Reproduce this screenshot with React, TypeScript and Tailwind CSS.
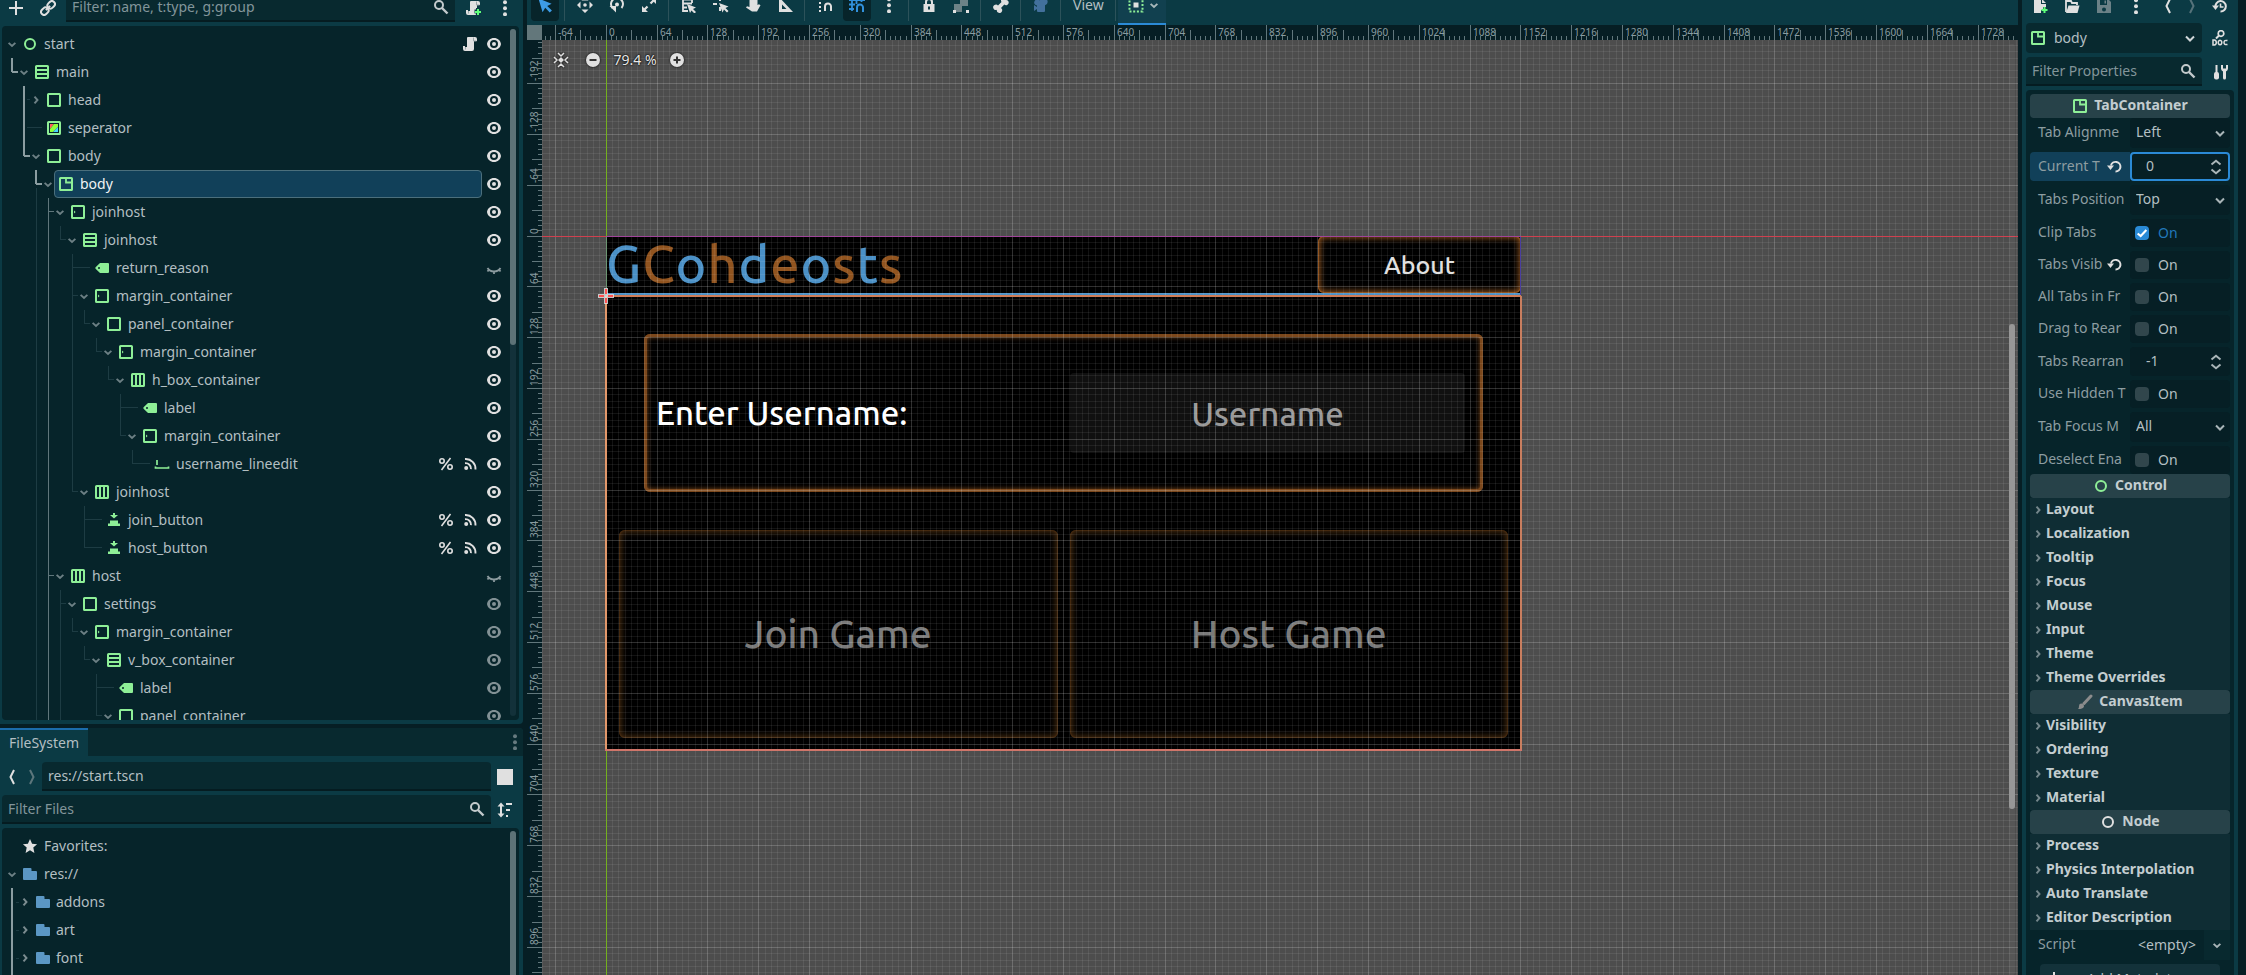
import React from "react";

type IconProps = { className?: string };

const GREEN = "#8eef97";

function Svg({ children, className = "", size = 16 }: { children: React.ReactNode; className?: string; size?: number }) {
  return (
    <svg width={size} height={size} viewBox="0 0 16 16" fill="none" className={"shrink-0 " + className} aria-hidden="true">
      {children}
    </svg>
  );
}

/* ---------- node type icons ---------- */

type NodeKind = "ring" | "box" | "vbox" | "hbox" | "margin" | "tabs" | "tag" | "line" | "button" | "color";

function NodeIcon({ kind, color = GREEN }: { kind: NodeKind; color?: string }) {
  const box = <rect x="2" y="2" width="12" height="12" rx="0.6" stroke={color} strokeWidth="2" />;
  switch (kind) {
    case "ring":
      return <Svg><circle cx="8" cy="8" r="5" stroke={color} strokeWidth="2" /></Svg>;
    case "box":
      return <Svg>{box}</Svg>;
    case "vbox":
      return <Svg>{box}<path d="M2 6h12M2 10h12" stroke={color} strokeWidth="2" /></Svg>;
    case "hbox":
      return <Svg>{box}<path d="M6 2v12M10 2v12" stroke={color} strokeWidth="2" /></Svg>;
    case "margin":
      return <Svg>{box}<path d="M4 6.5L5.6 8 4 9.5z" fill={color} /></Svg>;
    case "tabs":
      return <Svg>{box}<path d="M8 2v4.5h6" stroke={color} strokeWidth="1.8" /></Svg>;
    case "tag":
      return (
        <Svg>
          <path fillRule="evenodd" fill={color} d="M6 3L1.6 7.3a1 1 0 0 0 0 1.4L6 13h8a1 1 0 0 0 1-1V4a1 1 0 0 0-1-1zM5 7a1 1 0 1 1 0 2 1 1 0 0 1 0-2z" />
        </Svg>
      );
    case "line":
      return <Svg><path d="M3 4v5M1.5 10.5v1.5h13v-1.5" stroke={color} strokeWidth="1.7" /></Svg>;
    case "button":
      return <Svg><path fill={color} d="M7 1h2v2h3L8 6.5 4 3h3zM4 8.5h8v3h2V14H2v-2.5h2z" /></Svg>;
    case "color":
      return (
        <Svg>
          <path d="M4 4h4L4 9z" fill="#ff5f5f" />
          <path d="M8 4h4v3l-5 5H4V9z" fill="#8eff3a" />
          <path d="M12 7v5H7z" fill="#45d7ff" />
          {box}
        </Svg>
      );
  }
}

/* ---------- small glyphs ---------- */

const Chevron = ({ className = "" }: IconProps) => (
  <Svg className={className}><path d="M4 6.5L8 10.5l4-4" stroke="currentColor" strokeWidth="2" /></Svg>
);
const ArrowDown = ({ className = "" }: IconProps) => (
  <Svg size={12} className={className}><path d="M3.5 6.5L8 10.5l4.500-4" stroke="currentColor" strokeWidth="2.6" /></Svg>
);
const ArrowRight = ({ className = "" }: IconProps) => (
  <Svg size={12} className={className}><path d="M6 3.5L10 8l-4 4.500" stroke="currentColor" strokeWidth="2.6" /></Svg>
);
const Eye = ({ className = "" }: IconProps) => (
  <Svg className={className}>
    <path fillRule="evenodd" fill="currentColor" d="M8 2C4.300 2 1.500 4.500 1 8c.5 3.500 3.300 6 7 6s6.500-2.500 7-6c-.5-3.500-3.300-6-7-6zM8 4a4 4 0 1 1 0 8 4 4 0 0 1 0-8z" />
    <circle cx="8" cy="8" r="2" fill="currentColor" />
  </Svg>
);
const EyeClosed = ({ className = "" }: IconProps) => (
  <Svg className={className}>
    <path d="M1.500 8C3 10.500 5.500 11.500 8 11.500s5-1 6.500-3.500M3 9.500l-1.500 2M8 11.500v2.500M13 9.500l1.500 2" stroke="currentColor" strokeWidth="1.8" />
  </Svg>
);
const ScriptIcon = ({ plus = false }: { plus?: boolean }) => (
  <Svg>
    <path fill="#e0e0e0" d="M6 1a1 1 0 0 0-1 1v9H3v-1H1v3a2 2 0 0 0 2 2h7a2 2 0 0 0 2-2V5h3V3a2 2 0 0 0-2-2z" />
    <path stroke="#9aa5a8" strokeWidth="1" d="M11.500 1.500V5h3M3.500 11v2.500" />
    {plus && <path d="M13 8v7M9.500 11.500h7" stroke="#0b3a44" strokeWidth="4" />}
    {plus && <path d="M13 9v6M10 12h6" stroke="#5fff7a" strokeWidth="2" />}
  </Svg>
);
const Percent = () => (
  <Svg>
    <path d="M12.500 2L3.500 14" stroke="#e0e0e0" strokeWidth="1.5" />
    <circle cx="4" cy="5" r="2.2" stroke="#e0e0e0" strokeWidth="1.6" />
    <circle cx="12" cy="11" r="2.2" stroke="#e0e0e0" strokeWidth="1.6" />
  </Svg>
);
const Signal = () => (
  <Svg>
    <circle cx="4.2" cy="12" r="2" fill="#e0e0e0" />
    <path d="M3 7.200a5.500 5.500 0 0 1 6 6M3 3a9.800 9.800 0 0 1 10.500 10.500" stroke="#e0e0e0" strokeWidth="1.9" />
  </Svg>
);
const Search = ({ className = "" }: IconProps) => (
  <Svg className={className}>
    <circle cx="6" cy="6" r="4" stroke="currentColor" strokeWidth="2" />
    <path d="M9 9l5.500 5.500" stroke="currentColor" strokeWidth="2.4" />
  </Svg>
);
const Dots = ({ className = "text-[#e0e0e0]" }: IconProps) => (
  <Svg className={className}>
    <circle cx="8" cy="2.2" r="2" fill="currentColor" />
    <circle cx="8" cy="8.2" r="2" fill="currentColor" />
    <circle cx="8" cy="14.2" r="2" fill="currentColor" />
  </Svg>
);
const AngleLeft = ({ className = "" }: IconProps) => (
  <Svg className={className}><path d="M10 1L6.500 8l3.500 7" stroke="currentColor" strokeWidth="2" /></Svg>
);
const AngleRight = ({ className = "" }: IconProps) => (
  <Svg className={className}><path d="M6 1l3.500 7L6 15" stroke="currentColor" strokeWidth="2" /></Svg>
);
const Folder = () => (
  <Svg><path fill="#5b97c4" d="M2 2a1 1 0 0 0-1 1v10a1 1 0 0 0 1 1h12a1 1 0 0 0 1-1V6a1 1 0 0 0-1-1H9.500V3a1 1 0 0 0-1-1z" /></Svg>
);
const Revert = () => (
  <Svg>
    <path d="M5 7.500A4.800 4.800 0 1 1 9.500 13.500" stroke="#e0e0e0" strokeWidth="2" />
    <path d="M1 7.500h7L4.500 12z" fill="#e0e0e0" />
  </Svg>
);

/* ---------- scene tree ---------- */

type TreeNode = {
  name: string;
  depth: number;
  kind: NodeKind;
  open?: boolean;
  closed?: boolean;
  selected?: boolean;
  eye?: "on" | "dim" | "off";
  script?: boolean;
  signals?: boolean;
};

const SCENE: TreeNode[] = [
  { name: "start", depth: 0, kind: "ring", open: true, script: true },
  { name: "main", depth: 1, kind: "vbox", open: true },
  { name: "head", depth: 2, kind: "box", closed: true },
  { name: "seperator", depth: 2, kind: "color" },
  { name: "body", depth: 2, kind: "box", open: true },
  { name: "body", depth: 3, kind: "tabs", open: true, selected: true },
  { name: "joinhost", depth: 4, kind: "margin", open: true },
  { name: "joinhost", depth: 5, kind: "vbox", open: true },
  { name: "return_reason", depth: 6, kind: "tag", eye: "off" },
  { name: "margin_container", depth: 6, kind: "margin", open: true },
  { name: "panel_container", depth: 7, kind: "box", open: true },
  { name: "margin_container", depth: 8, kind: "margin", open: true },
  { name: "h_box_container", depth: 9, kind: "hbox", open: true },
  { name: "label", depth: 10, kind: "tag" },
  { name: "margin_container", depth: 10, kind: "margin", open: true },
  { name: "username_lineedit", depth: 11, kind: "line", signals: true },
  { name: "joinhost", depth: 6, kind: "hbox", open: true },
  { name: "join_button", depth: 7, kind: "button", signals: true },
  { name: "host_button", depth: 7, kind: "button", signals: true },
  { name: "host", depth: 4, kind: "hbox", open: true, eye: "off" },
  { name: "settings", depth: 5, kind: "box", open: true, eye: "dim" },
  { name: "margin_container", depth: 6, kind: "margin", open: true, eye: "dim" },
  { name: "v_box_container", depth: 7, kind: "vbox", open: true, eye: "dim" },
  { name: "label", depth: 8, kind: "tag", eye: "dim" },
  { name: "panel_container", depth: 8, kind: "box", open: true, eye: "dim" },
];

const ROW = 28;

function TreeLines() {
  const dim = "#1d3c43";
  const mid = "#5f767b";
  const bright = "#8b9da1";
  const lines: React.ReactNode[] = [];
  const cy = (i: number) => i * ROW + 14;
  const cx = (d: number) => 10 + 12 * d;
  SCENE.forEach((n, i) => {
    if (!n.open) return;
    const kids: number[] = [];
    let ended = false;
    for (let j = i + 1; j < SCENE.length; j++) {
      if (SCENE[j].depth <= n.depth) {
        ended = true;
        break;
      }
      if (SCENE[j].depth === n.depth + 1) kids.push(j);
    }
    const x = cx(n.depth);
    const onPath = i === 0 || i === 1 || i === 4;
    const color = onPath ? bright : n.selected ? mid : dim;
    const runsOn = !ended && (n.selected || n.name === "host");
    const end = kids.length ? cy(kids[kids.length - 1]) : cy(i) + 14;
    lines.push(
      <rect key={"v" + i} x={onPath ? x - 1 : x} y={cy(i) + 14} width={onPath ? 2 : 1} height={(runsOn ? 800 : end) - cy(i) - 14} fill={color} />
    );
    kids.forEach((k, idx) => {
      const kid = SCENE[k];
      const last = idx === kids.length - 1;
      const strong = onPath && last;
      lines.push(
        <rect
          key={"h" + k}
          x={onPath && !last ? x + 3 : x}
          y={cy(k) - 1}
          width={(kid.open || kid.closed ? 6 : 18) - (onPath && !last ? 3 : 0)}
          height={strong ? 2 : 1}
          fill={strong ? bright : onPath ? dim : color}
        />
      );
    });
  });
  lines.push(<rect key="rest" x={cx(2)} y={cy(5) + 4} width="1" height="800" fill={dim} />);
  return (
    <svg className="pointer-events-none absolute inset-x-0 top-0 h-full w-full" shapeRendering="crispEdges" aria-hidden="true">
      <svg y="4">{lines}</svg>
    </svg>
  );
}

function Cell({ children, label }: { children: React.ReactNode; label: string }) {
  return (
    <button type="button" aria-label={label} className="flex w-6 shrink-0 items-center justify-center">
      {children}
    </button>
  );
}

function SceneRow({ node }: { node: TreeNode }) {
  const eye = node.eye ?? "on";
  return (
    <li className="relative flex h-7 items-stretch" style={{ paddingLeft: 4 + node.depth * 12 }}>
      <span className="flex w-3 shrink-0 items-center justify-center text-[#6d8085]">
        {node.open && <ArrowDown />}
        {node.closed && <ArrowRight />}
      </span>
      <span
        className={
          "flex min-w-0 flex-1 items-center gap-1.5 rounded-sm border pl-[3px] " +
          (node.selected ? "border-[#4b6f7c] bg-[#114059] text-[#f0f3f4]" : "border-transparent")
        }
      >
        <NodeIcon kind={node.kind} />
        <span>{node.name}</span>
      </span>
      {node.signals && <Cell label="Unique name"><Percent /></Cell>}
      {node.signals && <Cell label="Signals"><Signal /></Cell>}
      {node.script && <Cell label="Open script"><ScriptIcon /></Cell>}
      <Cell label="Toggle visibility">
        {eye === "off" ? <EyeClosed className="text-[#8b9a9e]" /> : <Eye className={eye === "dim" ? "text-[#829195]" : "text-[#e0e0e0]"} />}
      </Cell>
    </li>
  );
}

const field = "min-w-0 border-b-2 border-[#051c21] bg-[#08292f] rounded-t-sm";
const fieldInput = "w-0 min-w-0 flex-1 bg-transparent outline-none placeholder:text-[#82959a]";

function SceneDock() {
  return (
    <section className="flex h-[724px] shrink-0 flex-col rounded-br-sm bg-[#0b3a44] pb-1">
      <div className="flex h-[22px] shrink-0 items-end overflow-hidden">
        <div className="flex h-[29px] flex-1 items-center">
          <button type="button" aria-label="Add node" className="flex w-8 justify-center">
            <Svg><path d="M8 1v14M1 8h14" stroke="#e0e0e0" strokeWidth="2" /></Svg>
          </button>
          <button type="button" aria-label="Instance scene" className="flex w-8 justify-center">
            <Svg>
              <g stroke="#e0e0e0" strokeWidth="2" transform="rotate(-45 8 8)">
                <rect x="-0.5" y="5" width="8" height="6" rx="3" />
                <rect x="8.5" y="5" width="8" height="6" rx="3" />
                <path d="M5 8h6" />
              </g>
            </Svg>
          </button>
          <div className={"ml-0.5 flex h-full flex-1 items-center gap-1.5 pl-1.5 pr-1.5 " + field}>
            <input aria-label="Filter nodes" placeholder="Filter: name, t:type, g:group" className={fieldInput} />
            <Search className="text-[#c3cacc]" />
          </div>
          <button type="button" aria-label="Attach script" className="ml-1 flex w-7 justify-center"><ScriptIcon plus /></button>
          <button type="button" aria-label="More options" className="mx-1 flex w-7 justify-center"><Dots /></button>
        </div>
      </div>
      <div className="relative mt-1 ml-0.5 mr-1 flex min-h-0 flex-1 overflow-hidden rounded-sm bg-[#06242a]">
        <TreeLines />
        <ul className="flex-1 pt-1">
          {SCENE.map((n, i) => <SceneRow key={i} node={n} />)}
        </ul>
        <div className="ml-1 mr-[3px] mt-[3px] mb-1 w-1.5 rounded-full bg-[#13313a]">
          <div className="h-[316px] rounded-full bg-[#5d7277]" />
        </div>
      </div>
    </section>
  );
}

function FileRow({ name }: { name: string }) {
  return (
    <li className="flex h-7 items-center">
      <span className="ml-[3px] h-px w-[3px] bg-[#1d3c43]" />
      <ArrowRight className="text-[#7c8c90]" />
      <span className="ml-1 flex items-center gap-[5px]"><Folder />{name}</span>
    </li>
  );
}

function FileDock() {
  return (
    <section className="mt-1 flex min-h-0 flex-1 flex-col rounded-t-sm bg-[#0b3a44]">
      <div className="flex h-7 shrink-0 items-stretch justify-between rounded-t-sm bg-[#08292f]">
        <button type="button" className="h-7 w-[88px] border-t-2 border-[#1b6cab] bg-[#0b3a44] text-center leading-[22px]">FileSystem</button>
        <button type="button" aria-label="Dock options" className="flex w-4 items-center justify-center"><Dots className="text-[#667a7f]" /></button>
      </div>
      <div className="mt-1.5 flex h-[29px] shrink-0 items-stretch">
        <button type="button" aria-label="Back" className="ml-1 flex w-4 items-center justify-center text-[#e0e0e0]"><AngleLeft /></button>
        <button type="button" aria-label="Forward" className="ml-1 flex w-4 items-center justify-center text-[#5d767c]"><AngleRight /></button>
        <div className={"ml-0.5 flex flex-1 items-center pl-1.5 " + field}>
          <input aria-label="Current path" defaultValue="res://start.tscn" className={fieldInput} />
        </div>
        <button type="button" aria-label="Toggle split mode" className="flex w-7 items-center justify-center"><span className="size-4 bg-[#e0e0e0]" /></button>
        <span className="w-1" />
      </div>
      <div className="mt-1 flex h-[29px] shrink-0 items-stretch">
        <div className={"ml-0.5 flex flex-1 items-center pl-1.5 pr-1.5 " + field}>
          <input aria-label="Filter files" placeholder="Filter Files" className={fieldInput} />
          <Search className="text-[#c3cacc]" />
        </div>
        <button type="button" aria-label="Sort files" className="flex w-7 items-center justify-center">
          <Svg>
            <path d="M4 3v10M9 2h6M9 8h4M9 14h2" stroke="#e0e0e0" strokeWidth="2" />
            <path d="M4 0.500l3.500 4h-7zM4 15.500l3.500-4h-7z" fill="#e0e0e0" />
          </Svg>
        </button>
        <span className="w-1" />
      </div>
      <div className="mt-1 ml-0.5 mr-1 flex min-h-0 flex-1 overflow-hidden rounded-t-sm bg-[#06242a]">
        <div className="flex flex-1 flex-col pt-1">
          <div className="flex h-7 items-center gap-1.5 pl-5">
            <Svg><path fill="#e0e0e0" d="M8 1l2.100 4.700 5 .5-3.800 3.400L12.400 15 8 12.200 3.600 15l1.100-5.400L.9 6.200l5-.5z" /></Svg>
            Favorites:
          </div>
          <div className="flex h-7 items-center pl-1">
            <ArrowDown className="text-[#6d8085]" />
            <span className="ml-1 flex items-center gap-1.5"><Folder />res://</span>
          </div>
          <ul className="ml-[9px] flex-1 border-l-2 border-[#8b9da1]">
            <FileRow name="addons" />
            <FileRow name="art" />
            <FileRow name="font" />
          </ul>
        </div>
        <div className="ml-1 mr-[3px] mt-[3px] w-1.5 rounded-t-full bg-[#5d7277]" />
      </div>
    </section>
  );
}

/* ---------- canvas toolbar ---------- */

function Tool({ label, active = false, children }: { label: string; active?: boolean; children: React.ReactNode }) {
  return (
    <button type="button" aria-label={label} className={"flex h-8 w-7 shrink-0 items-center justify-center rounded-sm " + (active ? "bg-[#07242a]" : "")}>
      {children}
    </button>
  );
}
const Sep = () => <span className="ml-px mr-0.5 h-8 w-px shrink-0 bg-[#2c525a]" />;

function Toolbar() {
  const w = "#e0e0e0";
  return (
    <div className="flex h-[25px] shrink-0 items-end overflow-hidden bg-[#0b3a44]">
      <div className="flex h-9 items-start gap-1 pl-1">
        <Tool label="Select" active>
          <Svg className="scale-110"><path fill="#3d9be6" d="M2 2l3.800 12.500 2.400-4 4.100 4.400 2-2-4.300-4 4-2z" /></Svg>
        </Tool>
        <Sep />
        <Tool label="Move">
          <Svg>
            <path fill={w} d="M8 0l3.500 3.500h-7zM8 16l3.500-3.500h-7zM0 8l3.500-3.500v7zM16 8l-3.500-3.500v7z" />
            <circle cx="8" cy="8" r="1.8" fill={w} />
          </Svg>
        </Tool>
        <Tool label="Rotate">
          <Svg>
            <path d="M3.500 11a6 6 0 1 1 9 0" stroke={w} strokeWidth="2" />
            <path d="M0.500 9h6.500v6.500z" fill={w} />
            <circle cx="8" cy="7.5" r="2" fill={w} />
          </Svg>
        </Tool>
        <Tool label="Scale">
          <Svg>
            <path fill={w} d="M9 1h6v6zM1 9v6h6z" />
            <path d="M13 3L9.500 6.500M3 13l3.500-3.500" stroke={w} strokeWidth="2.2" />
          </Svg>
        </Tool>
        <Sep />
        <Tool label="List select">
          <Svg>
            <path d="M2 0v14h5M2 2.500h9M2 6.500h9M2 10.500h4M11 0v6" stroke={w} strokeWidth="1.8" />
            <path fill={w} d="M6 7l9 3.500-3 1.500 3 3-1.500 1.500-3-3L9 16z" />
          </Svg>
        </Tool>
        <Tool label="Edit pivot">
          <Svg>
            <path d="M7 0v4M7 10v4M0 7h4" stroke={w} strokeWidth="2" />
            <path fill={w} d="M6 6l9.500 3.500-3 1.500 3 3-1.500 1.500-3-3-1.500 3z" />
          </Svg>
        </Tool>
        <Tool label="Pan">
          <Svg>
            <path fill={w} d="M4.500 10V3.500a1 1 0 0 1 2 0V1a1 1 0 0 1 2 0v-.5a1 1 0 0 1 2 0V2a1 1 0 0 1 2 .2V8l1.500-.8 1.500 1-3.500 6.300H7L1 10.500 2 9.300z" />
          </Svg>
        </Tool>
        <Tool label="Ruler">
          <Svg><path fillRule="evenodd" fill={w} d="M2 0v15h14zM5 7.500L9.500 12H5z" /></Svg>
        </Tool>
        <Sep />
        <Tool label="Smart snap">
          <Svg>
            <path d="M8 14V9.500a3 3 0 0 1 6 0V14" stroke={w} strokeWidth="2" />
            <path fill={w} d="M2 1h2v2H2zM6 1h2v2H6zM10 1h2v2h-2zM2 5h2v2H2zM2 9h2v2H2zM2 13h2v2H2z" />
          </Svg>
        </Tool>
        <Tool label="Grid snap" active>
          <Svg>
            <path d="M3 0v14M7.500 0v7M12.500 0v5M0 3h16M0 7.500h6M0 12h5" stroke="#3191dc" strokeWidth="1.8" />
            <path d="M8 15v-4.500a3 3 0 0 1 6 0V15" stroke="#3191dc" strokeWidth="2" />
          </Svg>
        </Tool>
        <Tool label="Snap options"><Dots /></Tool>
        <Sep />
        <Tool label="Lock">
          <Svg>
            <path d="M5 8V5a3 3 0 0 1 6 0v3" stroke={w} strokeWidth="2" />
            <path fillRule="evenodd" fill={w} d="M2.500 7h11v8h-11zM7 9.500v3h2v-3z" />
          </Svg>
        </Tool>
        <Tool label="Group">
          <Svg>
            <path d="M1 7h8v8H1zM7 1h8v8H7z" fill="#6d8287" />
            <path fill={w} d="M0 0h3v3H0zM13 0h3v3h-3zM0 13h3v3H0zM13 13h3v3h-3z" />
          </Svg>
        </Tool>
        <Sep />
        <Tool label="Skeleton">
          <Svg><path fill={w} d="M10.500 1a2.500 2.500 0 0 0-2 4L5 8.600a2.700 2.700 0 1 0-1.200 4.200A2.700 2.700 0 1 0 8 11l3.300-3.500A2.600 2.600 0 1 0 13 3a2.500 2.500 0 0 0-2.500-2z" /></Svg>
        </Tool>
        <Sep />
        <Tool label="Override camera">
          <Svg><path fill="#42709c" d="M9.500 1a3 3 0 0 0-3 2.600A3 3 0 1 0 4 8.500V10L1 8v6l3-2v2a1 1 0 0 0 1 1h6a1 1 0 0 0 1-1V8.200A3 3 0 0 0 9.500 1z" /></Svg>
        </Tool>
        <Sep />
        <button type="button" className="h-8 px-1.5 text-[14px] leading-8">View</button>
        <Sep />
      </div>
      <button type="button" aria-label="Container sizing" className="flex h-9 w-12 items-start border-b-2 border-[#2b8ad6] bg-[#11404f] px-2.5">
        <span className="flex h-8 items-center gap-1">
          <Svg>
            <rect x="1.5" y="1.5" width="13" height="13" stroke={GREEN} strokeWidth="2" strokeDasharray="2 1.7" />
            <rect x="5.5" y="5.5" width="5" height="5" fill={w} />
          </Svg>
          <ArrowDown className="text-[#a9b8bb]" />
        </span>
      </button>
    </div>
  );
}

/* ---------- canvas ---------- */

const ZOOM = 0.794;
const ORIGIN_X = 64.2;
const ORIGIN_Y = 196;

function range(from: number, to: number) {
  return Array.from({ length: to - from + 1 }, (_, i) => from + i);
}

function tickLength(k: number) {
  if (k % 10 === 0) return 15;
  return k % 5 === 0 ? 10 : 4;
}

function HorizontalRuler() {
  const step = 6.4 * ZOOM;
  return (
    <svg className="h-[15px] min-w-0 flex-1" aria-hidden="true">
      {range(-12, 279).map((k) => {
        const x = Math.floor(ORIGIN_X + k * step);
        const len = tickLength(k);
        return (
          <g key={k}>
            <rect x={x} y={15 - len} width="1" height={len} fill="#61777c" />
            {len === 15 && <text x={x + 3} y="11" fill="#8b9da1" fontSize="10" fontFamily="'Liberation Sans Narrow','Noto Sans',sans-serif">{(k * 64) / 10}</text>}
          </g>
        );
      })}
    </svg>
  );
}

function VerticalRuler() {
  const step = 6.4 * ZOOM;
  return (
    <svg className="h-full w-[15px] shrink-0" aria-hidden="true">
      {range(-38, 149).map((k) => {
        const y = Math.floor(ORIGIN_Y + k * step);
        const len = tickLength(k);
        return (
          <g key={k}>
            <rect x={15 - len} y={y} width={len} height="1" fill="#61777c" />
            {len === 15 && (
              <text transform={`translate(11 ${y - 2}) rotate(-90)`} fill="#8b9da1" fontSize="10" fontFamily="'Liberation Sans Narrow','Noto Sans',sans-serif">
                {(k * 64) / 10}
              </text>
            )}
          </g>
        );
      })}
    </svg>
  );
}

function GridOverlay() {
  const step = 8 * ZOOM;
  return (
    <svg className="pointer-events-none absolute inset-0 h-full w-full" shapeRendering="crispEdges" aria-hidden="true">
      {range(-10, 400).map((k) => (
        <rect key={"x" + k} x={Math.floor(ORIGIN_X + k * step)} y="0" width="1" height="100%" fill="#fff" fillOpacity={k % 8 === 0 ? 0.19 : 0.075} />
      ))}
      {range(-30, 240).map((k) => (
        <rect key={"y" + k} x="0" y={Math.floor(ORIGIN_Y + k * step)} width="100%" height="1" fill="#fff" fillOpacity={k % 8 === 0 ? 0.19 : 0.075} />
      ))}
      <rect x="0" y="196" width="100%" height="1" fill="#d0404f" />
      <rect x="64" y="0" width="1" height="100%" fill="#74b01e" />
      <rect x="64" y="196" width="915" height="1" fill="#a0459a" />
      <rect x="64" y="197" width="1" height="60" fill="#6b9472" />
      <rect x="978" y="197" width="1" height="60" fill="#4a3fa0" />
      <path d="M64 256h915" stroke="#cf7d58" strokeWidth="2" />
      <path d="M64 256v454" stroke="#e2976a" strokeWidth="2" />
      <path d="M979 256v454" stroke="#c97e5f" strokeWidth="2" />
      <path d="M63 710h917" stroke="#d0766a" strokeWidth="2" />
      <path d="M64 248v16M56 256h16" stroke="#dedede" strokeWidth="4" strokeOpacity="0.85" />
      <path d="M64 249v5M64 258v5M57 256h5M66 256h5" stroke="#ff5050" strokeWidth="2" />
    </svg>
  );
}

const GAME_FONT = "font-['Ubuntu','Noto_Sans',sans-serif] font-medium";

function GameView() {
  const title: [string, boolean][] = [
    ["G", true], ["C", false], ["o", true], ["h", false], ["d", true],
    ["e", false], ["o", true], ["s", false], ["t", true], ["s", false],
  ];
  return (
    <div className={"absolute left-[64px] top-[196px] flex h-[515px] w-[915px] flex-col bg-black " + GAME_FONT}>
      <header className="flex h-[57px] justify-between">
        <h1 className="flex gap-px text-[52px] leading-[56px]">
          {title.map(([ch, blue], i) => (
            <span key={i} className={blue ? "text-[#4a90c6]" : "text-[#91541f]"}>{ch}</span>
          ))}
        </h1>
        <button type="button" className="w-[203px] rounded-md text-[25px] text-[#e0e0e0] shadow-[inset_0_0_0_1px_#91541f,inset_0_0_6px_2px_#91541f]">About</button>
      </header>
      <div className="h-[3px] bg-[#4a90c6]" />
      <div className="flex flex-1 flex-col gap-[38px] pt-[38px] pb-[13px]">
        <div className="mx-[38px] flex h-[158px] items-center justify-between rounded-md pl-3 pr-[18px] shadow-[inset_0_0_0_3px_#7c481c,inset_0_0_5px_3px_#7c481c]">
          <label htmlFor="username" className="text-[33px] text-white">Enter Username:</label>
          <input id="username" placeholder="Username" className="h-20 w-[395px] rounded bg-[#101010] text-center text-[33px] outline-none placeholder:text-[#999]" />
        </div>
        <div className="flex flex-1 gap-3 px-[13px]">
          {["Join Game", "Host Game"].map((t) => (
            <button key={t} type="button" className="flex-1 rounded-md text-[39px] text-[#7a7a7a] shadow-[inset_0_0_0_1px_#44290f,inset_0_0_6px_2px_#4a2e11]">{t}</button>
          ))}
        </div>
      </div>
    </div>
  );
}

function ZoomControls() {
  return (
    <div className="absolute left-[11px] top-1.5 flex h-7 items-center text-[#e8e8e8] [text-shadow:0_0_2px_#000,0_0_2px_#000]">
      <button type="button" aria-label="Center view">
        <Svg className="drop-shadow-[0_0_1px_#000]">
          <path fill="#e0e0e0" d="M8 5l3 3-3 3-3-3z" />
          <path d="M5 1l3 3 3-3M5 15l3-3 3 3M1 5l3 3-3 3M15 5l-3 3 3 3" stroke="#e0e0e0" strokeWidth="1.5" />
        </Svg>
      </button>
      <button type="button" aria-label="Zoom out" className="ml-4">
        <Svg className="drop-shadow-[0_0_1px_#000]"><circle cx="8" cy="8" r="7" fill="#e0e0e0" /><path d="M4.500 8h7" stroke="#333" strokeWidth="2" /></Svg>
      </button>
      <span className="w-[68px] text-center text-[14px]">79.4 %</span>
      <button type="button" aria-label="Zoom in">
        <Svg className="drop-shadow-[0_0_1px_#000]"><circle cx="8" cy="8" r="7" fill="#e0e0e0" /><path d="M4.500 8h7M8 4.500v7" stroke="#333" strokeWidth="2" /></Svg>
      </button>
    </div>
  );
}

function CanvasArea() {
  return (
    <main className="flex min-w-0 flex-1 flex-col">
      <Toolbar />
      <div className="flex h-[15px] shrink-0">
        <span className="w-[15px] shrink-0 bg-[#63777b]" />
        <HorizontalRuler />
      </div>
      <div className="flex min-h-0 flex-1">
        <VerticalRuler />
        <div className="relative min-w-0 flex-1 overflow-hidden bg-[#4d4d4d]">
          <GameView />
          <GridOverlay />
          <ZoomControls />
          <div className="absolute bottom-0 right-[3px] top-1 w-1.5 rounded-full bg-white/5 pt-[280px]">
            <div className="h-[485px] rounded-full bg-[#979797]" />
          </div>
        </div>
      </div>
    </main>
  );
}

/* ---------- inspector ---------- */

type Prop = { label: string; type: "select" | "number" | "check"; value?: string; on?: boolean; revert?: boolean; active?: boolean };

const PROPS: Prop[] = [
  { label: "Tab Alignme", type: "select", value: "Left" },
  { label: "Current T", type: "number", value: "0", revert: true, active: true },
  { label: "Tabs Position", type: "select", value: "Top" },
  { label: "Clip Tabs", type: "check", on: true },
  { label: "Tabs Visib", type: "check", revert: true },
  { label: "All Tabs in Fr", type: "check" },
  { label: "Drag to Rear", type: "check" },
  { label: "Tabs Rearran", type: "number", value: "-1" },
  { label: "Use Hidden T", type: "check" },
  { label: "Tab Focus M", type: "select", value: "All" },
  { label: "Deselect Ena", type: "check" },
];

const HEIGHTS = { select: "h-[30px]", number: "h-[29px]", check: "h-7" };

function PropRow({ prop, id }: { prop: Prop; id: string }) {
  return (
    <div className={"flex " + HEIGHTS[prop.type]}>
      <div className={"flex w-[100px] shrink-0 items-center overflow-hidden rounded-l-sm pl-2 " + (prop.active ? "bg-[#114059]" : "")}>
        <label htmlFor={id} className="flex-1 whitespace-nowrap pb-0.5 text-[#8d9da1]">{prop.label}</label>
        {prop.revert && <span className="mr-2 flex pb-0.5"><Revert /></span>}
      </div>
      <div className={"flex min-w-0 flex-1 items-center rounded-sm bg-[#061f25] " + (prop.active ? "outline-2 -outline-offset-2 outline-[#2b8ad6]" : "")}>
        {prop.type === "select" && (
          <div className="relative flex h-full flex-1 items-center">
            <select id={id} className="h-full w-full appearance-none bg-transparent pb-0.5 pl-1.5 outline-none">
              <option>{prop.value}</option>
            </select>
            <Chevron className="pointer-events-none absolute right-0.5 text-[#a9b5b8]" />
          </div>
        )}
        {prop.type === "number" && (
          <>
            <input id={id} defaultValue={prop.value} className="w-0 flex-1 bg-transparent pb-0.5 pl-4 outline-none" />
            <Svg className="mr-1.5 text-[#a9b5b8]">
              <path d="M3.500 5.500L8 1.800l4.500 3.700M3.500 10.500L8 14.200l4.500-3.700" stroke="currentColor" strokeWidth="2" />
            </Svg>
          </>
        )}
        {prop.type === "check" && (
          <>
            <span className="relative ml-[5px] flex size-3.5">
              <input id={id} type="checkbox" defaultChecked={prop.on} className="size-3.5 appearance-none rounded-sm bg-[#31464c] checked:bg-[#2a8ad6]" />
              {prop.on && (
                <Svg size={14} className="pointer-events-none absolute inset-0"><path d="M3 8.500l3.500 3L13 4.500" stroke="#fff" strokeWidth="2.4" /></Svg>
              )}
            </span>
            <span className={"ml-[9px] " + (prop.on ? "text-[#2178ba]" : "")}>On</span>
          </>
        )}
      </div>
    </div>
  );
}

function Category({ title, icon }: { title: string; icon: React.ReactNode }) {
  return (
    <h2 className="flex h-6 items-center justify-center gap-1.5 rounded-sm bg-[#274249] font-bold text-[#c3cdd0]">
      {icon}
      <span className="pb-0.5">{title}</span>
    </h2>
  );
}

function Groups({ names }: { names: string[] }) {
  return (
    <div className="bg-[#0f2d34]">
      {names.map((n) => (
        <button key={n} type="button" className="flex h-6 w-full items-center pl-0.5 font-bold text-[#c3cdd0]">
          <ArrowRight className="text-[#75878c]" />
          <span className="pb-0.5 pl-0.5">{n}</span>
        </button>
      ))}
    </div>
  );
}

function Inspector() {
  const w = "#e0e0e0";
  return (
    <aside className="flex w-[216px] shrink-0 flex-col bg-[#0b3a44] px-1">
      <div className="flex h-[19px] shrink-0 items-end overflow-hidden">
        <div className="flex h-[26px] flex-1 items-center">
          <button type="button" aria-label="New resource" className="flex w-7 justify-center">
            <Svg>
              <path fill={w} d="M2 1h7v5h5v3h-3v3H9v3H2zM10 1l4 4h-4z" />
              <path d="M12.500 9v6M9.500 12h6" stroke="#5fff7a" strokeWidth="2" />
            </Svg>
          </button>
          <button type="button" aria-label="Load resource" className="ml-1 flex w-7 justify-center">
            <Svg>
              <path d="M2 14V3h5l1 2h5v2" stroke={w} strokeWidth="1.8" />
              <path fill={w} d="M4.500 7.500h11l-2 7.500H2z" />
            </Svg>
          </button>
          <button type="button" aria-label="Save resource" className="ml-1 flex w-7 justify-center">
            <Svg><path fillRule="evenodd" fill="#6b8187" d="M1 1h11l3 3v11H1zM4 2v5h7V2zM8 9.500a2 2 0 1 0 0 4 2 2 0 0 0 0-4zM8.500 2.500h1.500v3H8.500z" /></Svg>
          </button>
          <button type="button" aria-label="Resource options" className="ml-1 flex w-7 justify-center"><Dots /></button>
          <button type="button" aria-label="Previous object" className="ml-1.5 flex w-6 justify-center text-[#e0e0e0]"><AngleLeft /></button>
          <button type="button" aria-label="Next object" className="flex w-6 justify-center text-[#56727a]"><AngleRight /></button>
          <button type="button" aria-label="History" className="ml-auto flex w-7 justify-center">
            <Svg>
              <path d="M3.500 9a5.200 5.200 0 1 1 5 4.500" stroke={w} strokeWidth="2" />
              <path fill={w} d="M0 7.500h7L3.500 12z" />
              <path d="M8.500 5.500v3.500h3" stroke={w} strokeWidth="1.6" />
            </Svg>
          </button>
        </div>
      </div>
      <div className="mt-1 flex h-[30px] shrink-0">
        <button type="button" className="flex flex-1 items-center rounded-sm bg-[#08292f] pl-1">
          <NodeIcon kind="tabs" />
          <span className="flex-1 pl-2 text-left">body</span>
          <Chevron className="mr-1 text-[#d0d6d8]" />
        </button>
        <button type="button" aria-label="Open documentation" className="ml-1 flex w-7 items-center justify-center">
          <Svg>
            <circle cx="9" cy="3.5" r="2.8" stroke={w} strokeWidth="1.7" />
            <path d="M7 5.500L4 8.500" stroke={w} strokeWidth="2" />
            <path d="M1 10v5h1.300q2-.2 2-2.500T2.300 10zM8 10.200a1.800 2.300 0 1 0 .01 0zM15.500 10.500q-3.500-.6-3.500 2t3.500 2" stroke={w} strokeWidth="1.5" />
          </Svg>
        </button>
      </div>
      <div className="mt-1 flex h-[29px] shrink-0">
        <div className={"flex flex-1 items-center pl-1.5 pr-1.5 " + field}>
          <input aria-label="Filter properties" placeholder="Filter Properties" className={fieldInput} />
          <Search className="text-[#c3cacc]" />
        </div>
        <button type="button" aria-label="Manage properties" className="ml-1 flex w-7 shrink-0 items-center justify-center">
          <Svg>
            <path d="M4.500 1v8" stroke={w} strokeWidth="2" />
            <rect x="2" y="8" width="5" height="7.5" rx="2" fill={w} />
            <path fill={w} d="M9 1v3.500a3.300 3.300 0 0 0 2 3V14a1.500 1.500 0 0 0 3 0V7.500a3.300 3.300 0 0 0 2-3V1h-2v3.500h-3V1z" />
          </Svg>
        </button>
      </div>
      <div className="mt-1 min-h-0 flex-1 overflow-hidden rounded-t-sm bg-[#06242a] px-1 pt-1">
        <Category title="TabContainer" icon={<NodeIcon kind="tabs" />} />
        <div className="flex flex-col gap-1">
          {PROPS.map((p, i) => <PropRow key={p.label} prop={p} id={"prop-" + i} />)}
        </div>
        <Category title="Control" icon={<NodeIcon kind="ring" />} />
        <Groups names={["Layout", "Localization", "Tooltip", "Focus", "Mouse", "Input", "Theme", "Theme Overrides"]} />
        <Category
          title="CanvasItem"
          icon={
            <Svg>
              <path d="M14 2L7 9.500" stroke="#8c8c8c" strokeWidth="3" strokeLinecap="round" />
              <path fill="#8c8c8c" d="M4 9.500a3 3 0 0 1 3 3c-.5 2-3 2.500-6 2.500 1.200-1 .8-1.800 1-3a2.500 2.500 0 0 1 2-2.500z" />
            </Svg>
          }
        />
        <Groups names={["Visibility", "Ordering", "Texture", "Material"]} />
        <Category title="Node" icon={<NodeIcon kind="ring" color="#e0e0e0" />} />
        <Groups names={["Process", "Physics Interpolation", "Auto Translate", "Editor Description"]} />
        <div className="flex h-[30px] items-center">
          <span className="w-[100px] pb-0.5 pl-2 text-[#8d9da1]">Script</span>
          <button type="button" className="flex-1 text-center">&lt;empty&gt;</button>
          <button type="button" aria-label="Script options" className="flex h-full w-[26px] items-center justify-center bg-[#08292f] text-[#a9b5b8]"><ArrowDown /></button>
        </div>
        <button type="button" className="mx-auto mt-1 flex h-[30px] w-[180px] items-center rounded-sm bg-[#13323a] pl-1.5 pr-4">
          <Svg><path d="M8 1v14M1 8h14" stroke={w} strokeWidth="2" /></Svg>
          <span className="flex-1 text-center">Add Metadata</span>
        </button>
      </div>
    </aside>
  );
}

export default function App() {
  return (
    <div className="flex h-screen gap-1 overflow-hidden bg-[#061e24] pr-2 font-['Noto_Sans',sans-serif] text-[14px] leading-5 text-[#b3bfc2]">
      <div className="flex w-[523px] shrink-0 flex-col">
        <SceneDock />
        <FileDock />
      </div>
      <CanvasArea />
      <Inspector />
    </div>
  );
}
